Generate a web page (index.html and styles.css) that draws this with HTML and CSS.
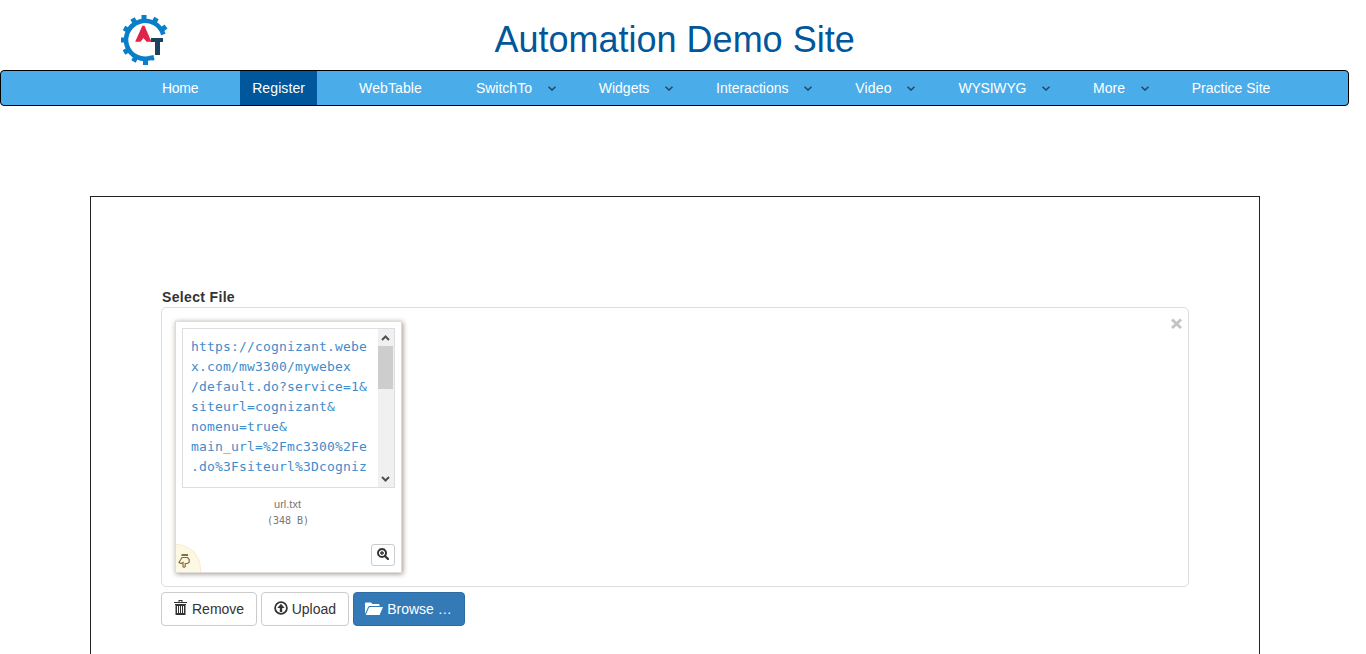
FILE: index.html
```html
<!DOCTYPE html>
<html lang="en">
<head>
<meta charset="utf-8">
<title>Automation Demo Site</title>
<link rel="stylesheet" href="styles.css">
</head>
<body>
<div class="page">
  <header class="header">
    <svg class="logo" viewBox="0 0 50 52">
      <path class="gear" fill="none" stroke-width="4.600" d="M43.300 20.500A19 19 0 1 0 31.500 43.700"/>
      <path class="gear teeth" fill="none" stroke-width="5" d="M24 1v6M12.500 4.500l3 5M36.500 4l-3 5.500M46 12.500l-6 4.500M4 14l5.500 3M1 26h6M4 38.500l5-3M13.500 47.500l3-5.500M25.500 51v-6M34 43.500l-3 .700"/>
      <path fill="#dc2548" d="M22.300 11.700h2.200l6.900 16h-4.900L23.500 24l-3 3.700H15.200z"/>
      <path fill="#1d425d" d="M31 24h12v4h-3v13h-5V28h-4z"/>
    </svg>
    <h1 class="title">Automation Demo Site</h1>
  </header>
  <nav class="nav">
    <a class="item home">Home</a>
    <a class="item active">Register</a>
    <a class="item webtable">WebTable</a>
    <a class="item menu">SwitchTo<svg class="chev" viewBox="0 0 8 5"><path d="M.500 .700l3.500 3.300L7.500 .700"/></svg></a>
    <a class="item menu">Widgets<svg class="chev" viewBox="0 0 8 5"><path d="M.500 .700l3.500 3.300L7.500 .700"/></svg></a>
    <a class="item menu">Interactions<svg class="chev" viewBox="0 0 8 5"><path d="M.500 .700l3.500 3.300L7.500 .700"/></svg></a>
    <a class="item menu video">Video<svg class="chev" viewBox="0 0 8 5"><path d="M.500 .700l3.500 3.300L7.500 .700"/></svg></a>
    <a class="item menu wysiwyg">WYSIWYG<svg class="chev" viewBox="0 0 8 5"><path d="M.500 .700l3.500 3.300L7.500 .700"/></svg></a>
    <a class="item menu">More<svg class="chev" viewBox="0 0 8 5"><path d="M.500 .700l3.500 3.300L7.500 .700"/></svg></a>
    <a class="item">Practice Site</a>
  </nav>
  <main class="panel">
    <label class="label">Select File</label>
    <section class="preview">
      <div class="card">
        <div class="textbox">
          <div class="filetext">https://cognizant.webe<br>x.com/mw3300/mywebex<br>/default.do?service=1&amp;<br>siteurl=cognizant&amp;<br>nomenu=true&amp;<br>main_url=%2Fmc3300%2Fe<br>.do%3Fsiteurl%3Dcogniz</div>
          <div class="scroll">
            <svg class="arrow" viewBox="0 0 9 6"><path d="M1 5l3.500-3.500L8 5"/></svg>
            <div class="thumb"></div>
            <svg class="arrow down" viewBox="0 0 9 6"><path d="M1 1l3.500 3.500L8 1"/></svg>
          </div>
        </div>
        <div class="filename">url.txt</div>
        <div class="filesize">(348 B)</div>
        <div class="actions">
          <div class="indicator">
            <svg class="hand" viewBox="0 0 12 14"><path fill="#8a6d3b" d="M3.500 0H10v2H3.500z"/><path fill="none" stroke="#8a6d3b" stroke-width="1.200" d="M4 3.500h5.500l1.700 2v2.700L9.500 9.500H7.200v3.200q-1.200 1.200-2.200 0V8.500L3 9.500 1 8.500z"/></svg>
          </div>
          <button class="zoom">
            <svg width="12" height="12" viewBox="0 0 12 12"><path fill="none" stroke="#333" stroke-width="1.900" d="M5 1a4 4 0 1 0 .01 0z"/><path fill="none" stroke="#333" stroke-width="1.300" d="M5 3v4M3 5h4"/><path stroke="#333" stroke-width="2.200" stroke-linecap="round" d="M8 8l3 3"/></svg>
          </button>
        </div>
      </div>
      <svg class="close" viewBox="0 0 12 12"><path d="M2 1.500l9 8.500M11 1.500L2 10"/></svg>
    </section>
    <div class="buttons">
      <button class="btn remove"><svg width="14" height="15" viewBox="0 0 14 15"><path fill="#333" fill-rule="evenodd" d="M4.500 0h4v2H13v1H0V2h4.500zM5.500 1v1h2V1zM1 4h11v1h-.500v10h-10V5H1zM3 6v7h1V6zM5 6v7h1V6zM7 6v7h1V6zM9 6v7h1V6z"/></svg><span>Remove</span></button>
      <button class="btn upload"><svg width="14" height="14" viewBox="0 0 14 14"><circle cx="7" cy="7" r="5.900" fill="none" stroke="#333" stroke-width="1.800"/><path fill="#333" d="M7 2.800l3.700 4.200H8.200v4H5.800V7H3.300z"/></svg><span>Upload</span></button>
      <button class="btn primary"><svg width="18" height="13" viewBox="0 0 18 13"><path fill="#fff" d="M0 12V1.500Q0 .500 1 .500h5L7.500 2H13.500q1 0 1 1v1H4.500q-1 0-1.400.900zM.800 13L4 5.600Q4.200 5 5 5H18l-3.200 7.500q-.200.500-.800.500z"/></svg><span>Browse …</span></button>
    </div>
  </main>
</div>
</body>
</html>
```
FILE: styles.css
```css
* { box-sizing: border-box; }
body {
  margin: 0;
  background: #fff;
  color: #333;
  font: 14px/20px "Liberation Sans", Arial, sans-serif;
  overflow: hidden;
}
.page { width: 1349px; height: 654px; overflow: hidden; display: flex; flex-direction: column; }
.header { height: 70px; flex: none; display: flex; align-items: flex-start; padding: 14px 0 0 120px; }
.logo { width: 50px; height: 52px; }
.gear { stroke: #0a7fc9; }
.title { margin: 6px 0 0 324.5px; font-size: 36px; line-height: 40px; font-weight: 400; color: #00579b; white-space: nowrap; }
.nav {
  height: 36px;
  flex: none;
  display: flex;
  gap: 30px;
  padding-left: 149px;
  border: 1px solid #000;
  border-radius: 4px;
  background: #4bacea;
}
.item { display: flex; align-items: center; padding: 0 12px; color: #fff; white-space: nowrap; }
.home { letter-spacing: -.3px; }
.webtable { letter-spacing: .1px; }
.active { background: #00579b; letter-spacing: .1px; }
.menu { padding-right: 1px; }
.video { letter-spacing: .15px; }
.wysiwyg { letter-spacing: -.2px; }
.chev { width: 8px; height: 5px; margin-left: 15.8px; }
.chev path { fill: none; stroke: #24465c; stroke-width: 1.5; }
.panel { flex: none; width: 1170px; height: 520px; margin: 90px 0 0 90px; padding: 90px 70px 0; border: 1px solid #222; }
.label { display: block; height: 20px; padding-left: 1px; font-weight: 700; letter-spacing: .34px; }
.preview {
  display: flex;
  justify-content: space-between;
  align-items: flex-start;
  height: 280px;
  padding: 13px 6px 0 13px;
  border: 1px solid #ddd;
  border-radius: 5px;
}
.close { width: 12px; height: 12px; margin-top: -3px; }
.close path { stroke: #c4c4c4; stroke-width: 3; }
.card {
  width: 227px;
  height: 252px;
  padding: 6px;
  border: 1px solid #ddd;
  box-shadow: 1px 1px 5px 0 #a2958a;
  display: flex;
  flex-direction: column;
}
.textbox { display: flex; justify-content: space-between; flex: none; height: 160px; border: 1px solid #ddd; }
.filetext {
  padding: 8px 0 0 8px;
  color: #428bca;
  font: 13px/20px "DejaVu Sans Mono", monospace;
  letter-spacing: .174px;
  white-space: nowrap;
}
.scroll { width: 16px; display: flex; flex-direction: column; align-items: flex-start; background: #f0f0f0; }
.arrow { width: 9px; height: 6px; margin: 6px 0 5px 3px; flex: none; }
.arrow path { fill: none; stroke: #505050; stroke-width: 2; }
.thumb { width: 15px; height: 43px; background: #cdcdcd; }
.down { margin: auto 0 5px 3px; }
.filename { margin-top: 8px; padding-right: 2px; text-align: center; font-size: 11px; line-height: 16px; color: #777; }
.filesize { padding: 1px 1px 0 0; text-align: center; font: 10px/16px "DejaVu Sans Mono", monospace; letter-spacing: -.05px; color: #777; }
.actions { display: flex; justify-content: space-between; align-items: flex-end; flex: 1; margin: 0 0 -6px -6px; }
.indicator {
  width: 25px;
  height: 28px;
  padding: 9px 0 0 2px;
  border: solid #faebcc;
  border-width: 1px 1px 0 0;
  border-radius: 0 25px 0 0;
  background: #fcf8e3;
}
.hand { display: block; width: 12px; height: 14px; }
.zoom {
  width: 24px;
  height: 22px;
  margin-bottom: 6px;
  padding: 0 1px 2px 0;
  display: flex;
  align-items: center;
  justify-content: center;
  background: #fff;
  border: 1px solid #ccc;
  border-radius: 3px;
}
.buttons { display: flex; gap: 4px; margin-top: 5px; }
.btn {
  height: 34px;
  padding: 0 12px;
  display: flex;
  align-items: center;
  gap: 4px;
  font: inherit;
  color: #333;
  background: #fff;
  border: 1px solid #ccc;
  border-radius: 4px;
  white-space: nowrap;
}
.btn svg { flex: none; margin-top: -2px; }
.remove svg { margin-top: -3px; }
.upload { width: 88px; padding: 0 11.5px; }
.primary { width: 112px; padding: 0 11px; color: #fff; background: #337ab7; border-color: #2e6da4; }
```
